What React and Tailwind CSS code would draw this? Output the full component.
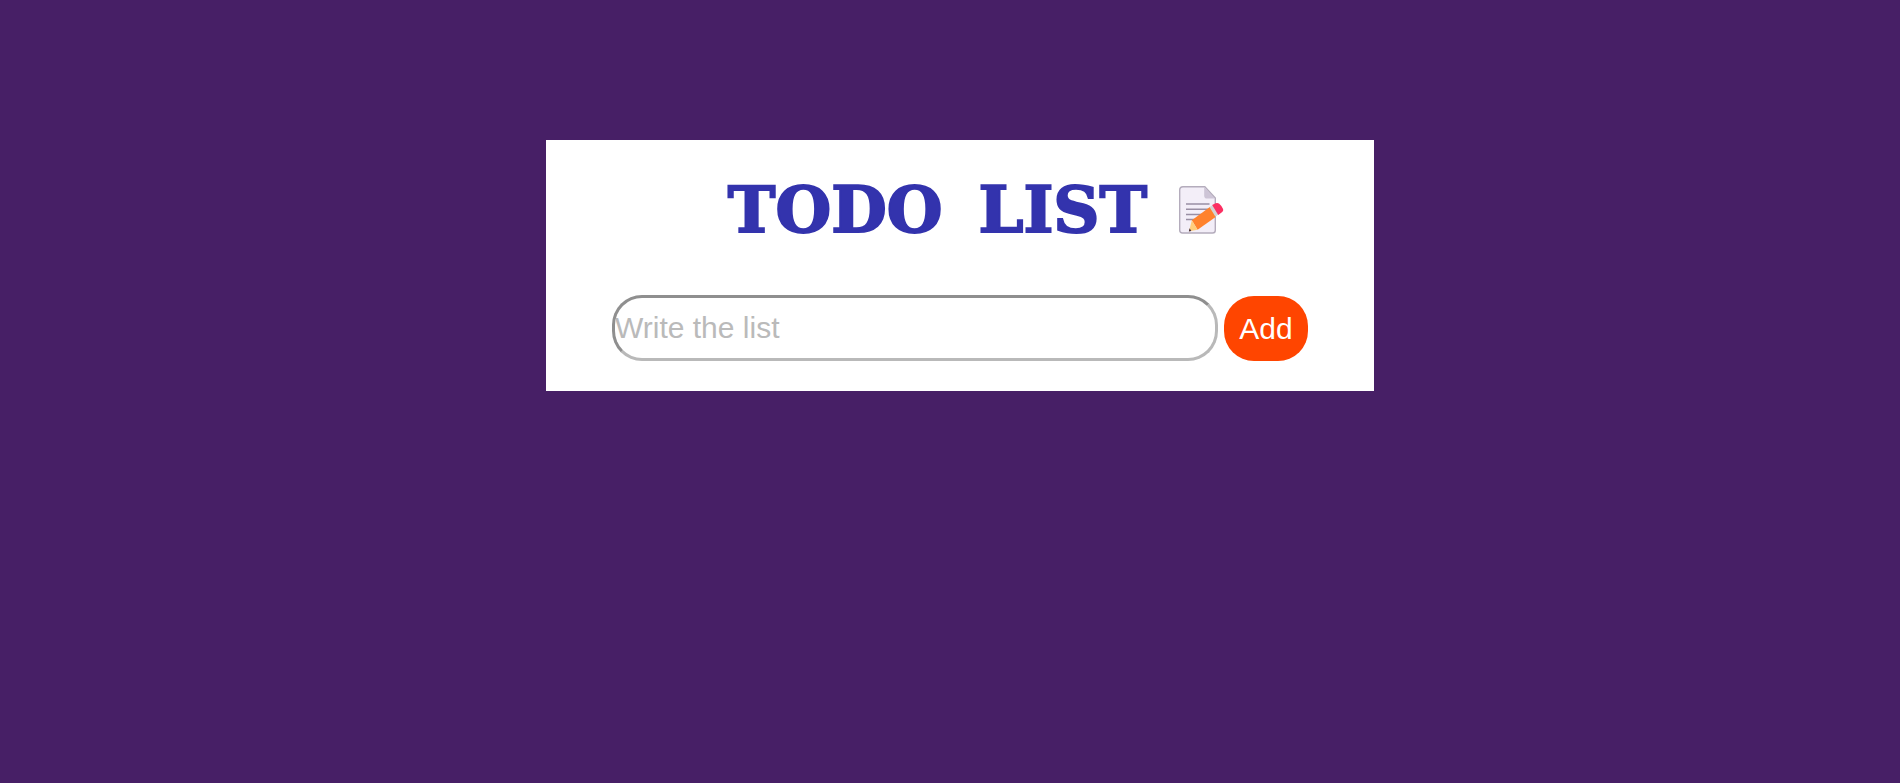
import { useState } from "react";

function MemoIcon() {
  return (
    <svg viewBox="0 0 45 48" className="h-12 w-[45px] shrink-0" aria-hidden="true">
      <path d="M4 .8H25.8L36.3 12V44.2Q36.3 47 33.5 47H3.5Q.7 47 .7 44.2V4Q.7.8 4 .8Z" fill="#f3eef8" stroke="#b4acbc" strokeWidth="1.4" />
      <path d="M25.2 1.2 36 12.6H28Q25.2 12.6 25.2 9.8Z" fill="#cdc4d6" />
      <path d="M7 18H30.5M7 23.3H30.5M7 28.5H25M7 33.6H18" stroke="#998ea4" strokeWidth="1.5" />
      <path d="M12.8 34.2 31.2 20.8 37 30.8 18.6 43.8Z" fill="#ff822d" />
      <path d="M12.8 34.2 18.6 43.8 10.1 45.3Z" fill="#ffce7c" />
      <path d="M10.6 42.3 12.3 44.9 9.8 45.4Z" fill="#402a32" />
      <path d="M30.6 21.2 34 18.8 39.8 28.2 36.5 30.8Z" fill="#d3d3d3" />
      <path d="M33.2 19.1 36.5 17.3Q38.6 16.4 40.3 17.7Q43 20 44.1 23.1Q44.6 24.9 43.2 26L39.2 28.9Z" fill="#fb2f62" />
    </svg>
  );
}

export default function App() {
  const [items, setItems] = useState([]);
  const [draft, setDraft] = useState("");

  function addItem(event) {
    event.preventDefault();
    if (!draft.trim()) return;
    setItems([...items, draft.trim()]);
    setDraft("");
  }

  return (
    <main className="min-h-screen bg-[#471f66] pt-[140px] pl-5 font-['Liberation_Sans',Arial,sans-serif] text-[30px]">
      <section className="mx-auto w-full max-w-[828px] bg-white px-[66px] pt-8 pb-[30px]">
        <header className="flex items-center justify-center">
          <h1 className="flex w-full max-w-[482px] justify-center gap-9 font-['Goudy_Stout','DejaVu_Serif',serif] text-[64px] leading-[76px] font-black whitespace-nowrap text-[#3333ad] [-webkit-text-stroke:2px_#3333ad]">
            <span>TODO</span> <span>LIST</span>
          </h1>
          <MemoIcon />
        </header>
        <form onSubmit={addItem} className="mt-[47px] flex items-end gap-1.5">
          <input
            type="text"
            aria-label="List item"
            placeholder="Write the list"
            value={draft}
            onChange={(event) => setDraft(event.target.value)}
            className="h-[66px] min-w-0 flex-1 rounded-[30px] border-3 border-t-[#8f8f8f] border-r-[#b9b9b9] border-b-[#b9b9b9] border-l-[#8f8f8f] bg-white text-black placeholder:text-[#bababa]"
          />
          <button type="submit" className="h-[65px] w-[84px] rounded-[30px] bg-[#ff4500] text-white">
            Add
          </button>
        </form>
        {items.length > 0 && (
          <ul className="mt-6 list-disc pl-8">
            {items.map((item, index) => (
              <li key={index}>{item}</li>
            ))}
          </ul>
        )}
      </section>
    </main>
  );
}
